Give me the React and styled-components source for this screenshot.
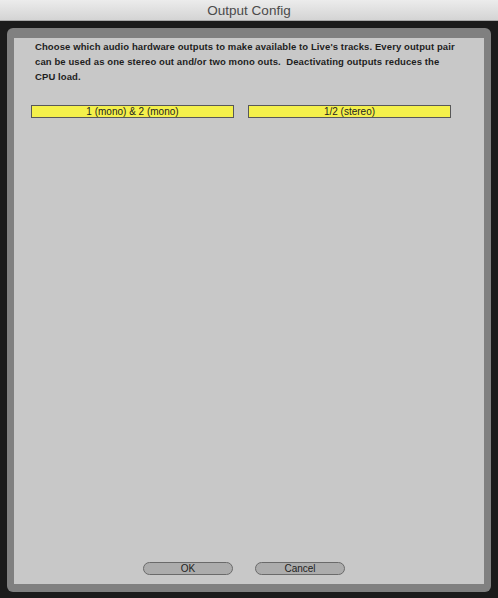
import React, { useState } from "react";
import styled, { createGlobalStyle } from "styled-components";

const Global = createGlobalStyle`
  html, body { margin: 0; padding: 0; background: #1b1b1b; }
  body { font-family: "Liberation Sans", Arial, sans-serif; }
  * { box-sizing: border-box; }
`;

const Window = styled.div`
  width: 498px;
  height: 598px;
  display: flex;
  flex-direction: column;
  background: #1b1b1b;
  overflow: hidden;
`;

const TitleBar = styled.div`
  height: 21px;
  flex: none;
  display: flex;
  align-items: center;
  justify-content: center;
  background: linear-gradient(#ececec, #d4d4d4);
  border-bottom: 1px solid #a8a8a8;
  color: #4a4a4a;
  font-size: 13.5px;
  font-family: "Liberation Sans", Arial, sans-serif;
`;

const Body = styled.div`
  flex: 1;
  display: flex;
  padding: 7px 7px 6px 7px;
`;

const Frame = styled.div`
  flex: 1;
  display: flex;
  background: #808080;
  border-radius: 6px;
  padding: 10px 7px 8px 7px;
`;

const Panel = styled.div`
  flex: 1;
  display: flex;
  flex-direction: column;
  background: #c8c8c8;
`;

const Description = styled.p`
  margin: 0;
  padding: 1px 21px 0 21px;
  font-size: 9.5px;
  letter-spacing: 0.1px;
  font-weight: bold;
  line-height: 15px;
  color: #1e1e1e;
  white-space: pre;
`;

const OutputRow = styled.div`
  display: flex;
  gap: 14px;
  padding: 21px 0 0 17px;
`;

const OutputToggle = styled.button`
  width: 203px;
  height: 13px;
  padding: 0;
  border: 1px solid #585858;
  background: ${(p) => (p.$active ? "#f4f04b" : "#b0b0b0")};
  color: #1e1e1e;
  font-family: "Liberation Sans", Arial, sans-serif;
  font-size: 10px;
  line-height: 11px;
  text-align: center;
  cursor: pointer;
`;

const Spacer = styled.div`
  flex: 1;
`;

const ButtonRow = styled.div`
  display: flex;
  gap: 22px;
  padding: 0 0 9px 129px;
`;

const PillButton = styled.button`
  width: 90px;
  height: 13px;
  padding: 0;
  border: 1px solid #6a6a6a;
  border-radius: 7px;
  background: #acacac;
  color: #1e1e1e;
  font-family: "Liberation Sans", Arial, sans-serif;
  font-size: 10px;
  line-height: 11px;
  text-align: center;
  cursor: pointer;
`;

export default function App() {
  const [active, setActive] = useState([true, true]);
  const outputs = ["1 (mono) & 2 (mono)", "1/2 (stereo)"];
  return (
    <>
      <Global />
      <Window>
        <TitleBar>Output Config</TitleBar>
        <Body>
          <Frame>
            <Panel>
              <Description>
                {"Choose which audio hardware outputs to make available to Live's tracks. Every output pair\ncan be used as one stereo out and/or two mono outs.  Deactivating outputs reduces the\nCPU load."}
              </Description>
              <OutputRow>
                {outputs.map((o, i) => (
                  <OutputToggle
                    key={o}
                    $active={active[i]}
                    onClick={() => setActive(active.map((a, j) => (j === i ? !a : a)))}
                  >
                    {o}
                  </OutputToggle>
                ))}
              </OutputRow>
              <Spacer />
              <ButtonRow>
                <PillButton>OK</PillButton>
                <PillButton>Cancel</PillButton>
              </ButtonRow>
            </Panel>
          </Frame>
        </Body>
      </Window>
    </>
  );
}
